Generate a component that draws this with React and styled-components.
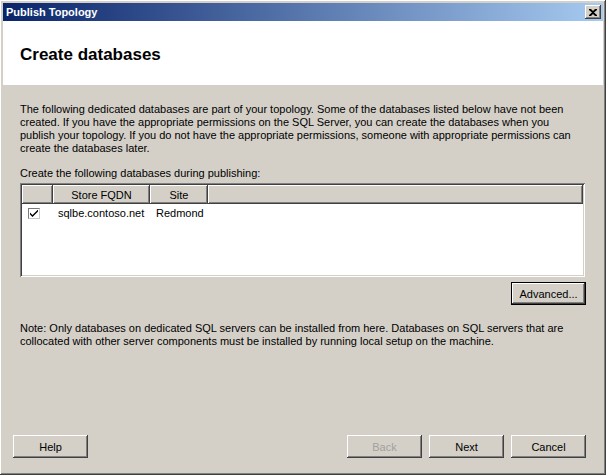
import React from 'react'
import styled, { createGlobalStyle } from 'styled-components'

const GlobalStyle = createGlobalStyle`
  html, body {
    margin: 0;
    padding: 0;
    background: #d4d0c8;
  }
  * {
    box-sizing: border-box;
  }
`

const raised = `
  box-shadow: inset -1px -1px #404040, inset 1px 1px #ffffff,
    inset -2px -2px #808080, inset 2px 2px #d4d0c8;
`

const Frame = styled.div`
  width: 606px;
  height: 475px;
  padding: 3px;
  display: flex;
  flex-direction: column;
  background: #d4d0c8;
  font-family: "Liberation Sans", Arial, sans-serif;
  font-size: 11px;
  color: #000;
  ${raised}
`

const TitleBar = styled.div`
  height: 18px;
  flex-shrink: 0;
  display: flex;
  align-items: center;
  justify-content: space-between;
  padding: 0 2px 0 3px;
  background: linear-gradient(to right, #0a246a, #a6caf0);
  color: #fff;
  font-weight: bold;
  font-size: 11px;
`

const CloseButton = styled.div`
  width: 16px;
  height: 14px;
  display: flex;
  align-items: center;
  justify-content: center;
  background: #d4d0c8;
  ${raised}
`

const Header = styled.div`
  height: 64px;
  flex-shrink: 0;
  background: #fff;
  display: flex;
  align-items: center;
  padding-left: 17px;
`

const Heading = styled.h1`
  margin: 4px 0 0;
  font-size: 17px;
  font-weight: bold;
`

const Body = styled.div`
  flex: 1;
  display: flex;
  flex-direction: column;
  padding: 18px 17px 0 17px;
`

const Text = styled.p`
  margin: ${p => p.$mt || 0}px 0 0;
  line-height: 13px;
  white-space: nowrap;
`

const List = styled.div`
  margin-top: 3px;
  width: 565px;
  height: 94px;
  background: #fff;
  padding: 2px;
  box-shadow: inset 1px 1px #808080, inset -1px -1px #ffffff,
    inset 2px 2px #404040, inset -2px -2px #d4d0c8;
`

const HeaderRow = styled.div`
  display: flex;
  height: 19px;
`

const HeaderCell = styled.div`
  width: ${p => (p.$w ? `${p.$w}px` : 'auto')};
  flex: ${p => (p.$w ? '0 0 auto' : '1')};
  display: flex;
  align-items: center;
  justify-content: center;
  background: #d4d0c8;
  ${raised}
`

const Row = styled.div`
  display: flex;
  align-items: center;
  height: 16px;
  margin-top: 1px;
`

const Cell = styled.div`
  width: ${p => p.$w}px;
  padding-left: ${p => p.$pl || 0}px;
  display: flex;
  align-items: center;
`

const Check = styled.div`
  width: 12px;
  height: 11px;
  border: 1px solid #7a7a7a;
  border-right-color: #c8c8c8;
  border-bottom-color: #c8c8c8;
  background: #fff;
  display: flex;
  align-items: center;
  justify-content: center;
`

const ButtonRow = styled.div`
  display: flex;
  justify-content: flex-end;
  margin-top: ${p => p.$mt || 0}px;
`

const Button = styled.div`
  width: 75px;
  height: 23px;
  display: flex;
  align-items: center;
  justify-content: center;
  background: #d4d0c8;
  color: ${p => (p.$disabled ? '#a0a0a0' : '#000')};
  ${raised}
  ${p => p.$default && `
    box-shadow: inset 0 0 0 1px #000, inset -2px -2px #404040, inset 2px 2px #ffffff,
      inset -3px -3px #808080;
  `}
`

const Footer = styled.div`
  margin-top: auto;
  display: flex;
  align-items: center;
  gap: 7px;
  padding: 0 17px 14px 10px;
`

const Spacer = styled.div`
  flex: 1;
`

const CloseIcon = () => (
  <svg width="8" height="7" viewBox="0 0 8 7">
    <path d="M0 0h2l2 2 2-2h2v1L5 3.5 8 6v1H6L4 5 2 7H0V6l3-2.5L0 1z" fill="#000" />
  </svg>
)

const CheckIcon = () => (
  <svg width="8" height="7" viewBox="0 0 8 7">
    <path d="M0 2.5 L0 4.5 L2.5 7 L8 1.5 L8 -0.5 L2.5 5 Z" fill="#000" />
  </svg>
)

export default function App() {
  return (
    <>
      <GlobalStyle />
      <Frame>
        <TitleBar>
          <span>Publish Topology</span>
          <CloseButton>
            <CloseIcon />
          </CloseButton>
        </TitleBar>
        <Header>
          <Heading>Create databases</Heading>
        </Header>
        <Body>
          <Text>
            The following dedicated databases are part of your topology. Some of the databases listed below have not been
            <br />
            created. If you have the appropriate permissions on the SQL Server, you can create the databases when you
            <br />
            publish your topology. If you do not have the appropriate permissions, someone with appropriate permissions can
            <br />
            create the databases later.
          </Text>
          <Text $mt={12}>Create the following databases during publishing:</Text>
          <List>
            <HeaderRow>
              <HeaderCell $w={31} />
              <HeaderCell $w={97}>Store FQDN</HeaderCell>
              <HeaderCell $w={58}>Site</HeaderCell>
              <HeaderCell />
            </HeaderRow>
            <Row>
              <Cell $w={31} $pl={6}>
                <Check>
                  <CheckIcon />
                </Check>
              </Cell>
              <Cell $w={97} $pl={5}>sqlbe.contoso.net</Cell>
              <Cell $w={58} $pl={6}>Redmond</Cell>
            </Row>
          </List>
          <ButtonRow $mt={5}>
            <Button $default>Advanced...</Button>
          </ButtonRow>
          <Text $mt={17}>
            Note: Only databases on dedicated SQL servers can be installed from here. Databases on SQL servers that are
            <br />
            collocated with other server components must be installed by running local setup on the machine.
          </Text>
        </Body>
        <Footer>
          <Button>Help</Button>
          <Spacer />
          <Button $disabled>Back</Button>
          <Button>Next</Button>
          <Button>Cancel</Button>
        </Footer>
      </Frame>
    </>
  )
}
